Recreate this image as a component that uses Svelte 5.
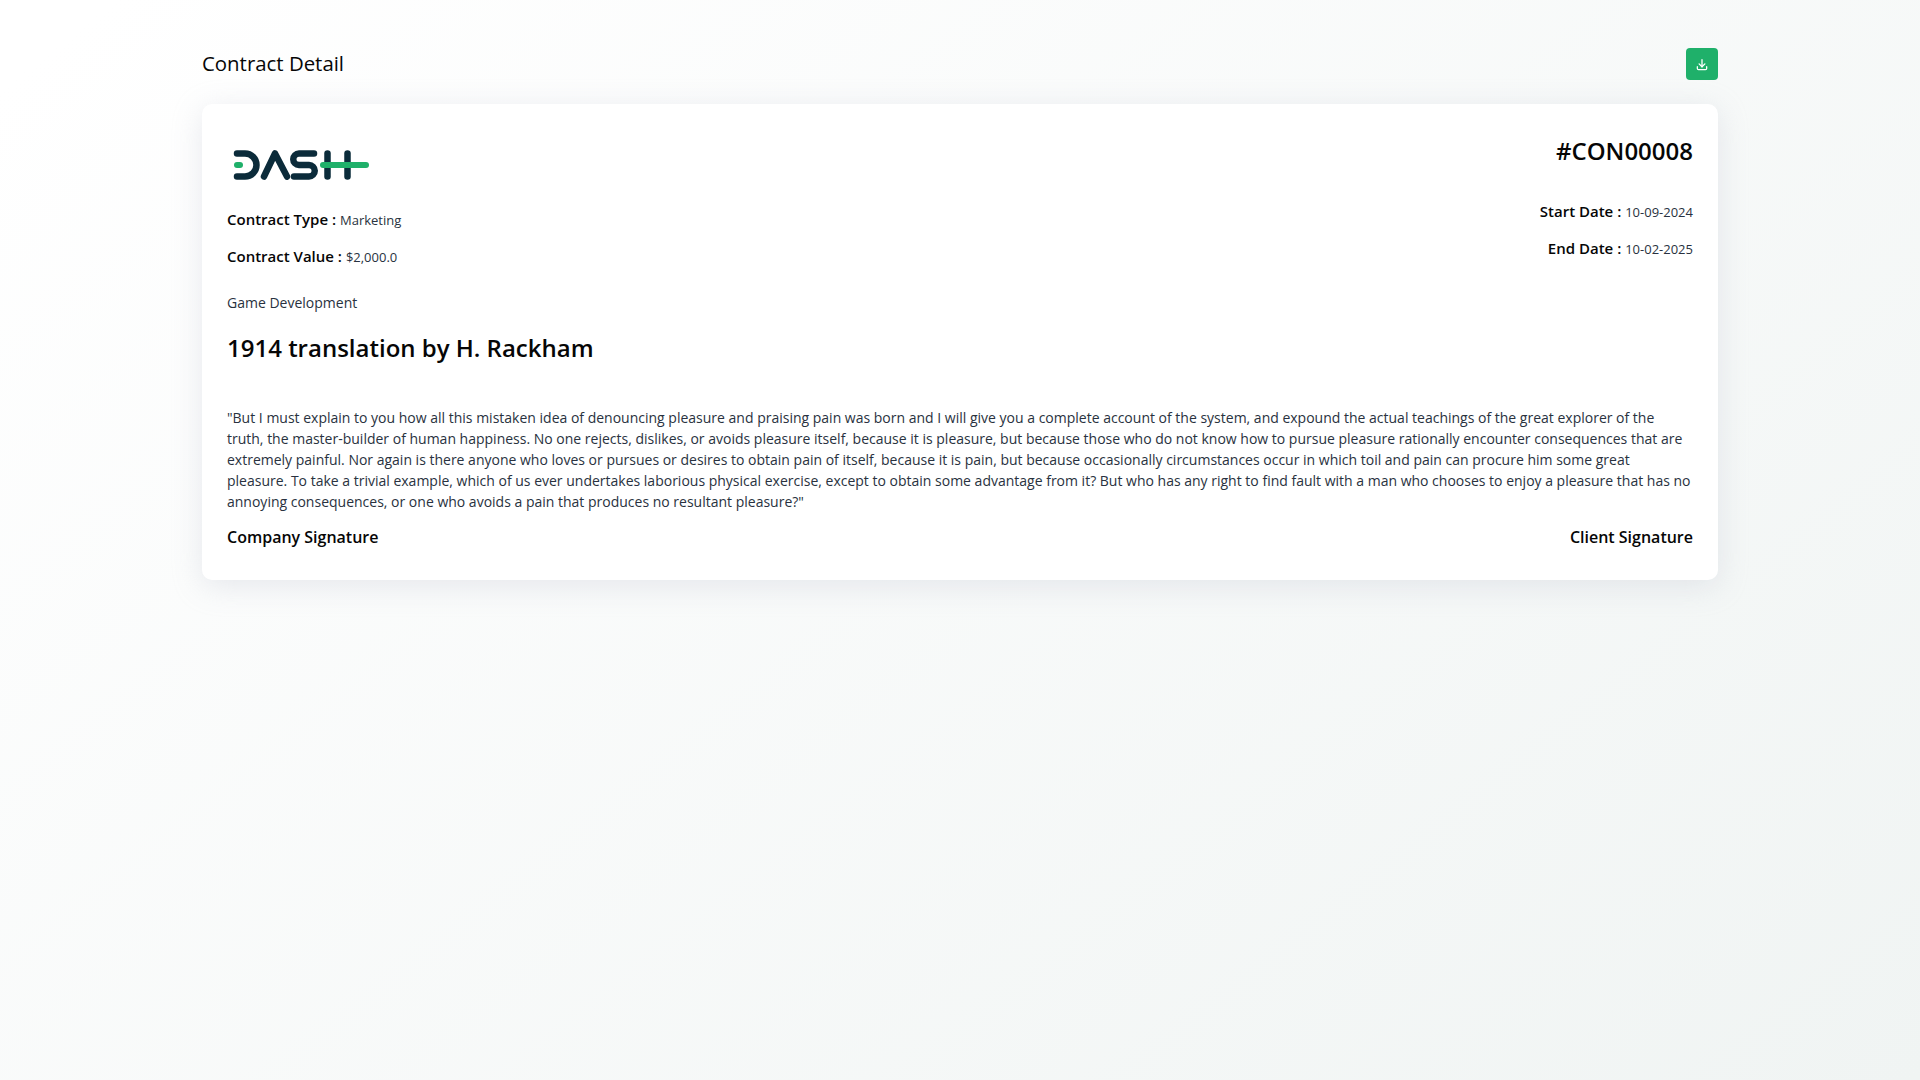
<script>
  const paragraph = '"But I must explain to you how all this mistaken idea of denouncing pleasure and praising pain was born and I will give you a complete account of the system, and expound the actual teachings of the great explorer of the truth, the master-builder of human happiness. No one rejects, dislikes, or avoids pleasure itself, because it is pleasure, but because those who do not know how to pursue pleasure rationally encounter consequences that are extremely painful. Nor again is there anyone who loves or pursues or desires to obtain pain of itself, because it is pain, but because occasionally circumstances occur in which toil and pain can procure him some great pleasure. To take a trivial example, which of us ever undertakes laborious physical exercise, except to obtain some advantage from it? But who has any right to find fault with a man who chooses to enjoy a pleasure that has no annoying consequences, or one who avoids a pain that produces no resultant pleasure?"';
</script>

<div class="page">
  <div class="header">
    <h4>Contract Detail</h4>
    <button class="download" aria-label="Download">
      <svg width="14" height="14" viewBox="0 0 24 24" fill="none" stroke="#fff" stroke-width="2.2" stroke-linecap="round" stroke-linejoin="round">
        <path d="M4 15v3a2 2 0 0 0 2 2h12a2 2 0 0 0 2-2v-3"></path>
        <polyline points="7 10 12 15 17 10"></polyline>
        <line x1="12" y1="3" x2="12" y2="15"></line>
      </svg>
    </button>
  </div>

  <div class="card">
    <div class="top">
      <div>
        <svg class="logo" width="140" height="34" viewBox="0 0 140 34" fill="none" stroke-linecap="round" stroke-linejoin="round">
          <g stroke="#0b2b3a" stroke-width="6.500">
            <path d="M4 5.500H12a11.500 11.500 0 0 1 0 23H4"></path>
            <path d="M31 28.500L42 5.500L54 28.500"></path>
            <path d="M81 5.500H66a5.750 5.750 0 0 0 0 11.500H76a5.750 5.750 0 0 1 0 11.500H61"></path>
            <path d="M94.500 5.500V28.500"></path>
            <path d="M114.500 5.500V28.500"></path>
          </g>
          <g stroke="#1fb06a" stroke-width="6">
            <path d="M4 17h3"></path>
            <path d="M90 17h43"></path>
          </g>
        </svg>
        <p class="meta"><b>Contract Type :</b> <span>Marketing</span></p>
        <p class="meta"><b>Contract Value :</b> <span>$2,000.0</span></p>
      </div>
      <div class="right">
        <h3>#CON00008</h3>
        <p class="meta"><b>Start Date :</b> <span>10-09-2024</span></p>
        <p class="meta"><b>End Date :</b> <span>10-02-2025</span></p>
      </div>
    </div>

    <p class="subject">Game Development</p>
    <h2>1914 translation by H. Rackham</h2>
    <p class="body">{paragraph}</p>

    <div class="signatures">
      <b>Company Signature</b>
      <b>Client Signature</b>
    </div>
  </div>
</div>

<style>
  :global(body) {
    margin: 0;
    min-height: 100vh;
    font-family: "Open Sans", sans-serif;
    background: linear-gradient(141.55deg, #ffffff 3.46%, #f0f4f3 99.86%);
    color: #293240;
  }

  .page {
    width: 1516px;
    margin: 0 auto;
    padding-top: 48px;
  }

  .header {
    display: flex;
    align-items: center;
    justify-content: space-between;
    height: 32px;
    margin-bottom: 24px;
  }

  h4 {
    margin: 0 0 2px;
    font-size: 20.400px;
    font-weight: 500;
    color: #060606;
  }

  .download {
    width: 32px;
    height: 32px;
    padding: 2px 0 0;
    border: none;
    border-radius: 4px;
    background: #1fb06a;
    display: flex;
    align-items: center;
    justify-content: center;
  }

  .card {
    background: #fff;
    border-radius: 10px;
    box-shadow: 0 6px 30px rgba(182, 186, 203, 0.3);
    padding: 25px 25px 31px;
  }

  .top {
    display: flex;
    justify-content: space-between;
  }

  .logo {
    display: block;
    margin: 19px 0 27px 6px;
  }

  .right {
    text-align: right;
  }

  h3 {
    margin: 4px 0 32px;
    font-size: 24px;
    line-height: 36px;
    font-weight: 600;
    color: #060606;
  }

  .meta {
    margin: 0 0 15px;
    font-size: 15px;
    line-height: 21px;
    color: #293240;
  }

  .meta b {
    font-weight: 600;
    color: #060606;
  }

  .meta span {
    font-size: 13px;
  }

  .subject {
    margin: 9px 0 17px;
    font-size: 14px;
    line-height: 21px;
  }

  h2 {
    margin: 0 0 41px;
    font-size: 24px;
    line-height: 36px;
    font-weight: 600;
    color: #060606;
  }

  .body {
    margin: 0 0 13px;
    font-size: 14px;
    line-height: 21px;
  }

  .signatures {
    display: flex;
    justify-content: space-between;
    font-size: 16px;
    line-height: 24px;
    color: #060606;
  }

  .signatures b {
    font-weight: 600;
  }
</style>
